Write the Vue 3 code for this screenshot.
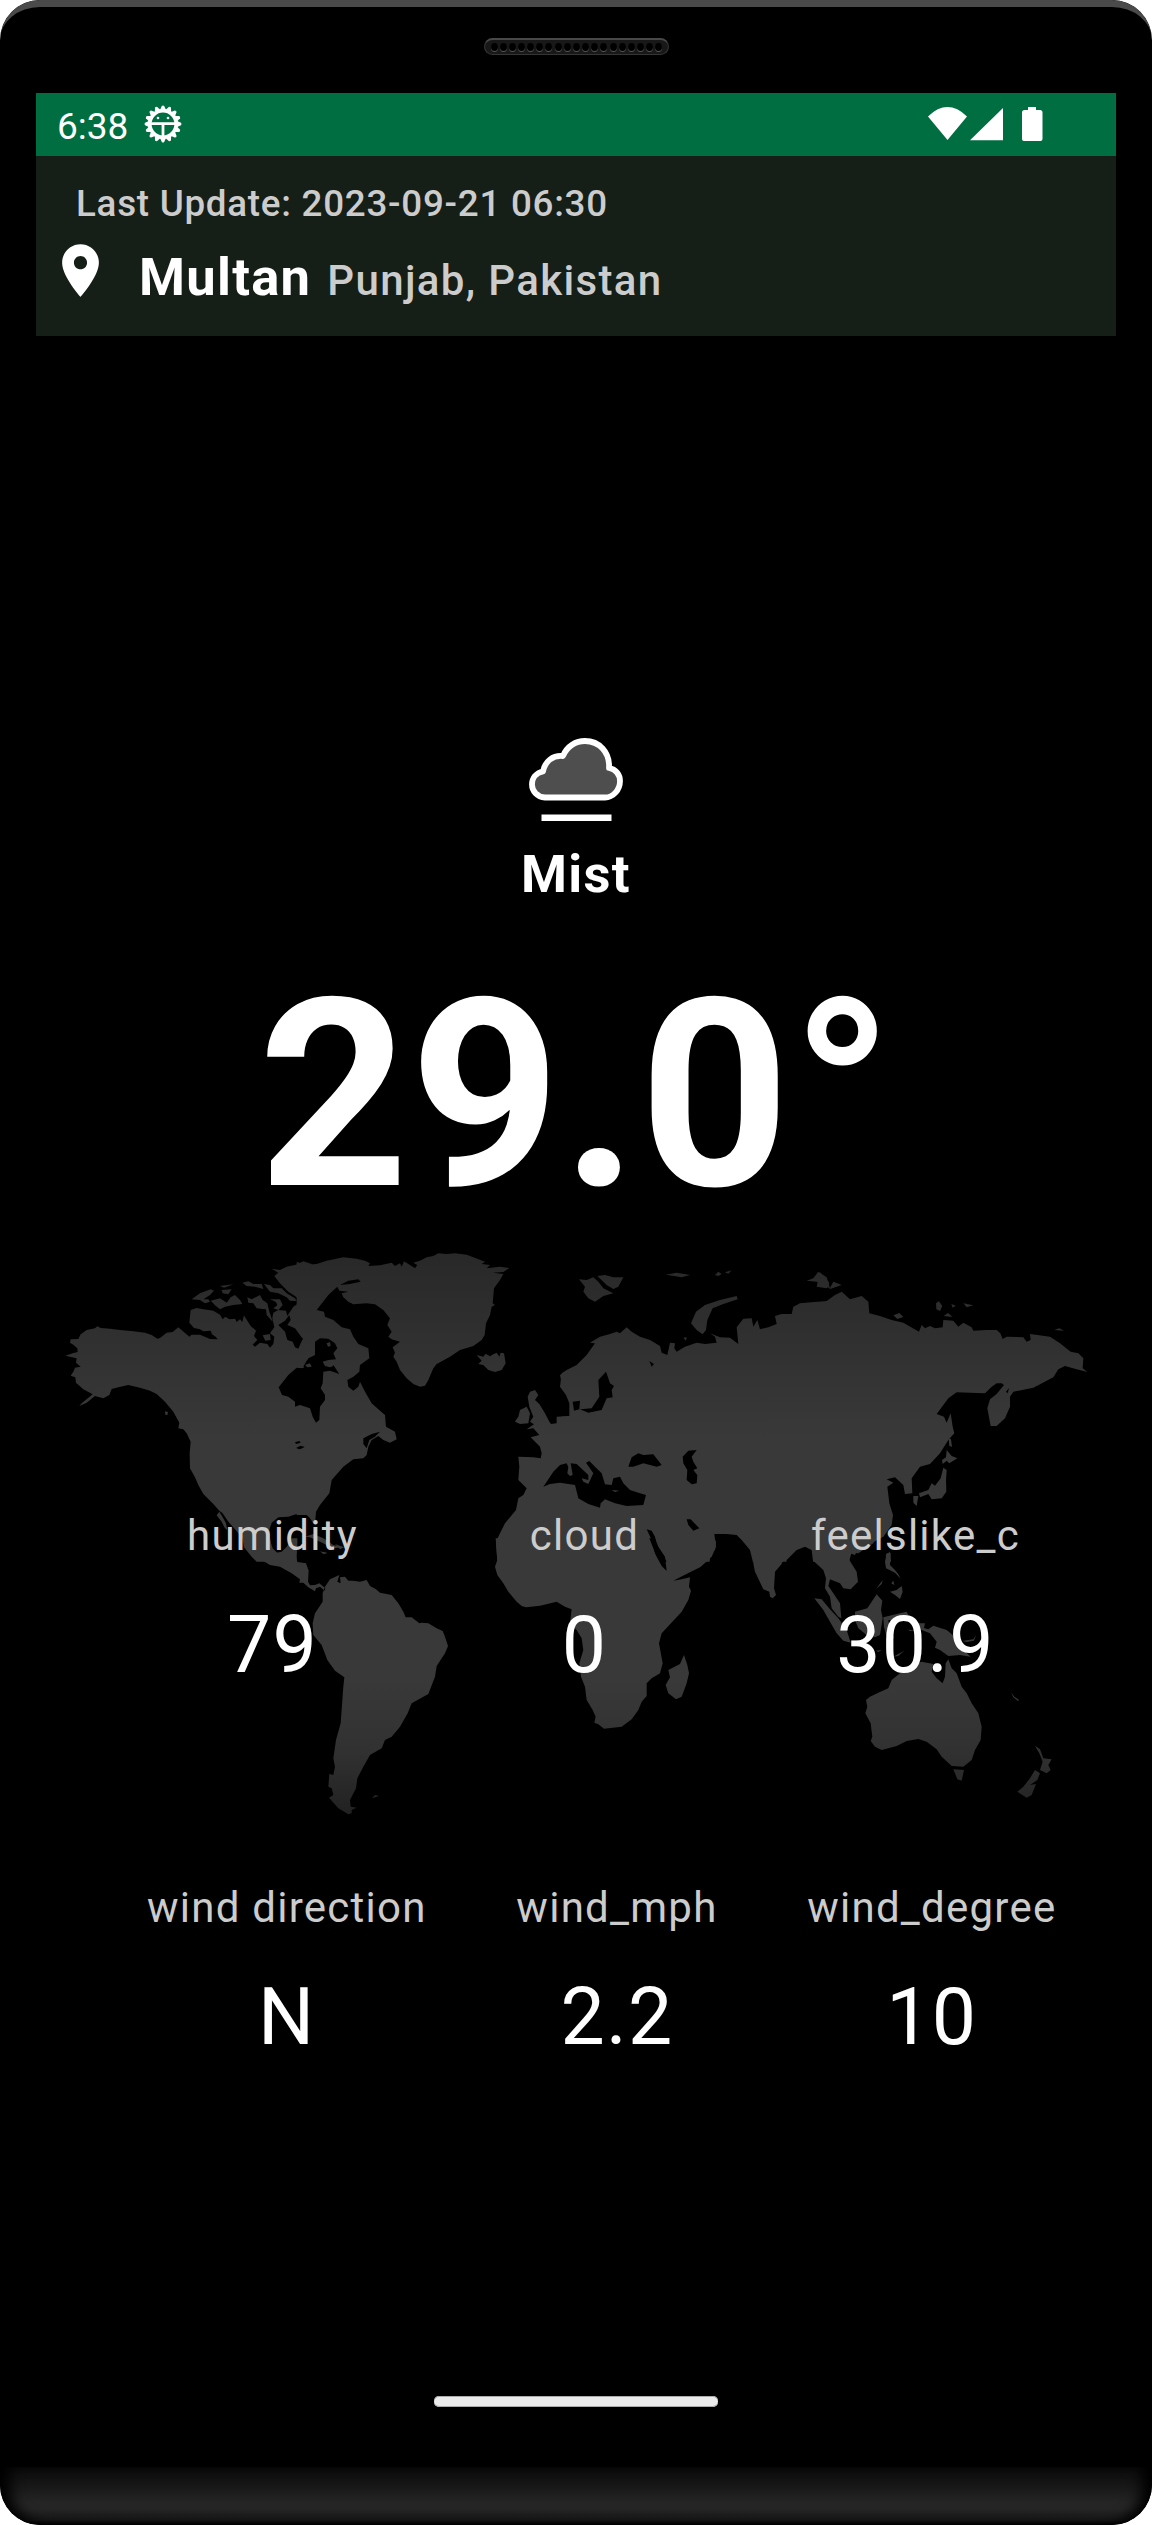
<script setup>
const rows = [
  { id: 'air', items: [
    { label: 'humidity', value: '79' },
    { label: 'cloud', value: '0' },
    { label: 'feelslike_c', value: '30.9' },
  ] },
  { id: 'wind', items: [
    { label: 'wind direction', value: 'N' },
    { label: 'wind_mph', value: '2.2' },
    { label: 'wind_degree', value: '10' },
  ] },
]

// Coastlines are grouped by map sheet; every sheet is drawn at 3x with its own origin.
const sheets = {
  alaska: 'translate(40 1240) scale(.33333)',
  atlantic: 'translate(300 1240) scale(.33333)',
  europe: 'translate(560 1240) scale(.33333)',
  pacific: 'translate(820 1240) scale(.33333)',
  south: 'translate(220 1540) scale(.33333)',
  africa: 'translate(480 1540) scale(.33333)',
  oceania: 'translate(780 1540) scale(.33333)',
}

const land = [
  { sheet: 'alaska', d: 'M76 347L98 340 113 336 112 325 100 314 90 308 92 298 115 297 122 283 140 270 165 265 172 259 182 264 210 266 240 270 280 274 315 278 335 285 352 296 360 294 380 278 398 276 415 262 448 290 455 284 480 284 510 297 533 298 527 290 516 283 512 272 490 274 480 268 462 264 448 248 452 210 470 204 490 208 520 212 540 224 548 238 556 230 568 238 585 236 590 246 600 238 607 246 612 225 625 240 635 262 655 265 668 272 690 280 703 262 697 235 700 218 715 210 738 212 742 228 760 200 790 180 815 170 815 826 770 822 745 830 715 832 695 848 688 870 690 900 698 925 710 938 725 935 740 920 752 902 765 900 770 915 770 965 650 965 635 950 612 922 607 895 585 868 565 845 548 820 538 812 520 792 490 762 475 735 465 712 450 685 449 640 452 605 440 580 430 568 415 565 418 548 400 515 375 485 350 462 330 452 300 443 265 435 235 442 215 447 208 465 190 475 165 468 140 488 118 498 125 490 158 463 130 448 108 428 106 412 92 407 100 395 105 383 122 380 108 368 110 355ZM538 815L530 826 545 845 555 865 562 870 558 850 548 832ZM375 514L384 516 382 525 376 524ZM815 72L790 64 768 74 740 80 720 90 695 86 715 98 703 108 720 130 745 155 765 168 790 190 815 190Z' },
  { sheet: 'atlantic', d: 'M-10 65L15 75 50 72 80 62 130 52 170 56 195 62 210 70 205 78 240 76 275 68 285 78 300 70 305 80 312 64 330 75 345 85 352 75 340 68 360 62 380 52 400 48 415 40 440 42 465 40 500 44 520 52 555 65 545 72 570 75 560 85 600 80 628 84 610 96 578 98 610 102 600 120 582 145 578 190 585 195 575 200 570 225 558 250 554 285 545 300 520 318 480 330 450 350 410 372 400 385 385 420 375 437 360 440 340 432 320 415 300 390 290 365 280 350 285 338 278 322 300 305 275 298 265 290 275 275 262 255 270 235 250 210 225 193 200 190 160 193 145 185 130 172 125 160 145 155 118 152 112 140 85 165 50 210 72 215 75 230 100 240 125 262 150 268 160 290 175 312 205 325 208 355 180 375 178 395 160 410 142 420 145 440 160 452 175 440 180 425 195 455 215 490 240 512 255 525 258 560 285 575 290 598 270 608 250 600 235 588 215 600 205 620 200 645 190 655 160 658 130 680 95 720 88 760 60 795 48 815 46 840 40 850 30 835 20 825-10 825Z' },
  { sheet: 'atlantic', d: 'M530 345L550 350 557 341 570 349 580 343 590 338 598 350 602 338 612 340 617 370 605 390 585 396 565 390 550 375 535 372 545 362ZM815 385L780 405 785 430 800 465 815 480ZM690 455L705 450 715 465 705 480 718 492 735 520 748 545 753 552 770 550 785 530 820 527 820 965 592 965 588 905 600 880 615 850 648 810 655 775 670 765 680 745 655 720 658 680 655 650 700 652 722 655 725 640 720 620 692 592 718 585 700 565 680 568 702 553 690 545 700 530 688 500 683 470ZM660 510L680 500 690 520 685 550 660 552 645 545 655 530ZM15 890L40 882 70 895 100 915 130 922 100 925 60 905 30 892ZM60 934L82 940 70 942Z' },
  { sheet: 'europe', d: 'M5 400L20 390 50 375 80 345 105 310 90 308 120 290 150 282 170 275 180 280 200 262 215 275 240 290 270 300 300 318 305 338 322 345 330 308 345 310 343 325 350 335 375 320 410 308 435 312 470 308 465 290 450 280 480 292 510 293 535 312 530 262 550 236 575 235 580 260 592 240 600 268 625 262 650 252 645 228 665 222 695 222 700 200 720 190 770 185 790 185 790 965 -10 965-10 530 28 528 28 490 18 465 0 440Z' },
  { sheet: 'europe', d: 'M57 118L80 120 100 112 115 125 130 145 160 160 130 168 105 185 85 175 70 155 75 140ZM112 108L135 105 160 112 190 112 175 140 160 147 140 135ZM318 104L350 98 390 105 365 112ZM465 105L475 95 485 102 475 108ZM495 97L515 91 505 101ZM393 250L408 215 435 195 480 180 530 168 533 178 490 192 458 205 442 240 438 270 428 283 410 270ZM370 293L380 292 378 302ZM740 122L760 115 775 95 800 112 810 145 790 138 770 125Z' },
  { sheet: 'pacific', d: 'M-10 187L20 183 45 165 65 155 90 178 125 168 145 185 148 220 180 228 215 240 250 248 297 275 305 255 315 265 330 258 345 265 368 262 370 240 400 242 415 260 430 248 455 262 460 272 500 270 530 270 541 280 548 297 560 290 610 292 620 305 632 300 630 282 690 290 720 310 752 335 775 340 790 355 788 385 802 396 770 388 735 378 715 388 700 412 640 443 580 455 570 470 570 500 555 535 530 558 512 558 502 505 510 478 530 462 552 435 545 430 530 430 515 440 495 460 450 458 410 457 385 475 350 522 372 530 380 548 392 520 398 560 403 580 385 600 360 640 330 672 300 680 275 715 277 760 255 762 250 735 225 712 200 718 220 728 202 740 208 790 219 825 215 855 190 890 150 912 110 935 105 945 90 940 88 965-10 965Z' },
  { sheet: 'pacific', d: 'M0 97L28 128 20 145-10 140ZM40 125L65 135 28 148ZM348 190L357 184 367 198 360 213 349 208ZM394 192L407 197 398 203ZM430 190L460 196 440 202ZM371 228L384 219 398 231ZM220 226L238 219 250 231 232 237ZM703 270L718 265 732 272ZM386 595L393 598 396 620 388 618ZM380 630L395 648 412 655 388 670 380 662 368 672 366 660 378 652ZM370 683L380 690 378 720 379 755 365 775 335 778 325 762 300 772 297 760 325 750 335 730 345 737 362 715ZM280 768L295 768 290 798 280 788ZM197 945L210 935 213 965 202 965Z' },
  { sheet: 'south', d: 'M70-5L80 22 105 48 150 75 180 80 215 100 240 118 238 128 250 128 265 142 285 154 288 145 300 140 314 152 316 145 298 130 285 135 270 136 264 125 266 92 258 70 232 66 228 50 232 20 232-5 215-5 200 35 175 41 155 25 150-5ZM305 35L322 38 308 40ZM345 12L372 22 360 28ZM315 140L330 118 358 105 352 125 362 130 360 112 375 110 385 122 400 122 420 125 440 120 450 138 468 148 480 158 515 165 535 190 550 215 557 232 575 232 598 250 605 248 625 250 650 265 668 273 675 290 684 318 675 340 650 378 645 410 625 462 575 490 563 520 540 560 515 590 495 600 485 625 450 645 430 680 412 715 408 745 390 780 392 800 410 803 395 810 395 820 385 823 355 805 327 773 340 765 335 745 325 740 328 702 340 705 345 680 340 655 348 600 362 550 370 440 373 412 345 392 322 360 305 315 280 285 278 250 285 220 308 185 308 160ZM456 775L465 765 477 768Z' },
  { sheet: 'africa', d: 'M47-5L52 60 45 80 52 105 70 130 85 155 110 185 125 198 138 202 180 197 230 185 255 200 275 208 270 250 290 270 305 295 310 330 298 370 303 410 315 440 320 480 338 510 347 530 343 548 355 553 372 566 425 560 455 538 475 510 485 485 500 468 500 430 515 415 540 400 548 370 537 310 545 280 605 215 625 180 633 152 627 140 630 112 605 118 580 122 600 112 660 82 695 50 708 20 703-5ZM777-5L812 30 825 95 850 148 868 155 870 170 878 175 888 165 882 145 885 95 905 72 905-5ZM612 345L622 375 627 400 620 430 605 470 588 478 565 460 557 435 570 412 565 390 600 372Z' },
  { sheet: 'oceania', d: 'M-5-5L-5 78 40 35 75 22 95 32 100 62 130 90 138 115 135 145 150 170 155 205 175 230 184 235 180 190 160 160 145 138 150 118 180 130 190 145 212 148 234 125 230 95 208 60 215 38 235 40 280 10 285-5ZM103 175L125 178 150 208 175 235 200 270 212 308 190 302 170 280 150 245 130 210ZM225 215L262 205 290 163 307 182 303 210 308 235 300 285 285 292 260 285 235 265 225 240ZM320 40L332 40 330 75 345 90 355 103 362 116 345 98 318 85 315 65ZM288 147L308 120 305 132ZM330 155L350 150 365 138 368 155 360 177 345 165ZM340 122L343 135 334 130ZM310 232L335 226 380 215 385 225 355 240 325 240 330 270 343 295 320 290 312 260ZM383 269L405 271 390 273ZM410 250L435 250 432 264 445 268 460 257 500 270 530 295 545 325 572 350 540 345 505 348 480 330 465 323 470 305 450 280 425 270ZM545 303L580 298 588 286 582 302 560 306ZM288 332L305 330 295 336ZM340 350L373 332 355 348Z' },
  { sheet: 'oceania', d: 'M258 480L270 470 295 458 325 445 335 420 360 400 385 388 405 372 425 365 460 372 455 395 470 415 488 430 495 410 497 370 505 358 515 385 530 400 545 440 560 460 575 490 595 520 605 560 602 600 585 630 575 660 550 680 515 678 485 650 470 628 440 605 415 597 380 603 350 618 305 630 285 620 272 603 277 590 272 550 256 520 262 500ZM520 688L552 690 545 722 532 718ZM693 457L703 470 717 480 714 483 700 472ZM765 617L780 628 790 655 815 658 805 675 812 690 800 700 780 690 788 665 778 640ZM765 690L780 700 772 720 750 735 768 732 755 765 740 773 712 755 730 740 750 715Z' },
]

const water = [
  { sheet: 'alaska', d: 'M815 380L785 385 770 383 745 405 716 442 726 465 745 470 765 485 790 495 815 500ZM765 607L778 603 782 608 768 612ZM768 624L782 617 794 621 780 628ZM605 215L640 228 665 250 690 280 703 290 700 312 690 323 682 312 660 308 645 320 638 314 652 300 642 288 648 272 630 255ZM748 225L752 240 742 255 765 265 788 296 775 326 765 322 758 305 742 300 735 275 715 255 735 242ZM790 380L800 362 815 355 815 385Z' },
  { sheet: 'atlantic', d: 'M-15 388L10 385 25 355 45 345 45 305 60 295 85 296 105 310 112 325 100 340 108 358 85 360 68 365 75 378 100 375 118 402 90 392 70 395 68 430 62 445 75 465 75 480 60 500 58 540 48 548 38 530 30 505 0 495-15 500ZM190 595L215 582 240 575 225 590 208 600 200 625 190 612ZM120 135L145 122 175 118 182 125 150 132ZM0 290L9 296 0 310ZM-5 620L12 622-5 628Z' },
  { sheet: 'europe', d: 'M-50 740L-20 695 0 675 20 670 25 682 22 700 30 708 38 705 32 670 50 672 85 705 85 720 65 715 70 725 85 732 95 710 100 700 78 668 88 663 105 680 125 700 135 733 155 735 160 715 180 710 190 730 210 750 240 760 258 765 250 795 200 798 165 790 135 778 122 790 120 803 85 792 55 775 45 735 0 728-30 732ZM205 680L215 652 235 640 250 645 280 643 305 675 290 680 250 670 220 680ZM410 630L385 632 368 650 370 670 382 690 380 720 395 733 410 730 412 705 400 690 412 685 400 665 395 650ZM138 395L145 415 150 430 162 438 155 450 158 472 140 475 125 510 85 518 60 508 95 505 118 470 115 420ZM38 485L60 482 58 508 42 512ZM268 363L282 372 275 380ZM260 868L275 872 285 890 290 915 320 965 300 965 285 940 275 900ZM380 838L392 838 418 865 400 872 385 855ZM465 930L468 905 455 882 500 882 530 885 545 900 570 930 580 971 448 971 452 940ZM678 971L680 960 710 930 735 920 755 930 760 971Z' },
  { sheet: 'africa', d: 'M508-5L525-5 535 20 555 50 560 93 545 78 530 50Z' },
  { sheet: 'pacific', d: 'M558 455L567 444 563 460Z' },
]

const islands = [
  { sheet: 'alaska', d: 'M455 178L480 160 512 148 522 152 510 165 490 178 505 178 510 185 495 190 480 180ZM512 182L540 175 560 188 572 172 585 165 600 180 607 192 580 195 555 200 540 208 525 196ZM545 150L575 148 565 163 548 160ZM540 138L580 133 552 143ZM607 128L625 124 640 132 665 132 670 147 645 140 620 138ZM622 172L635 178 650 170 660 165 668 180 682 190 688 215 698 245 680 225 678 208 650 205 640 190 625 188ZM672 132L690 135 700 145 725 145 740 160 765 175 770 183 750 182 740 172 715 160 690 155ZM690 178L720 178 728 195 715 210 700 205 712 196 708 186ZM668 286L690 282 692 300 676 302Z' },
  { sheet: 'atlantic', d: 'M80 310L90 306 92 318 84 320ZM15 375L30 370 35 380 22 382ZM75 378L90 382 100 378 95 370Z' },
  { sheet: 'europe', d: 'M155 750L178 752 165 756Z' },
  { sheet: 'africa', d: 'M660 82L695 50 708 20 703-18 670-18 640 60Z' },
]

const holes = Array.from({ length: 19 }, (_, i) => i)
const teeth = Array.from({ length: 16 }, (_, i) => i * 22.5)
</script>

<template>
  <main class="phone">
    <div class="bezel-top">
      <div class="speaker"><i v-for="h in holes" :key="h"></i></div>
    </div>

    <div class="screen">
      <div class="status">
        <span class="clock">6:38</span>
        <svg class="debug" viewBox="0 0 38 38">
          <g fill="#fff">
            <path v-for="a in teeth" :key="a" d="M15.8 5.500L17.800 1Q19 0 20.200 1L22.200 5.500Z" :transform="`rotate(${a} 19 19)`" />
          </g>
          <circle cx="19" cy="19" r="13.200" fill="none" stroke="#fff" stroke-width="3.600" />
          <path d="M5 18.600H33M19 19V32" stroke="#fff" stroke-width="2.800" />
          <circle cx="14" cy="13" r="1.300" fill="#fff" /><circle cx="24" cy="13" r="1.300" fill="#fff" />
        </svg>
        <svg class="signals" viewBox="0 0 116 36" fill="#fff">
          <path d="M0 9.5Q19.5-9.3 39 9.5L19.5 33ZM42 33.3L75 1V33.3ZM100 0H108V3H112Q114.500 3 114.500 5.500V32Q114.500 34 112.500 34H96Q94 34 94 32V5.500Q94 3 96.500 3H100Z" />
        </svg>
      </div>

      <header class="place">
        <div class="updated">Last Update: 2023-09-21 06:30</div>
        <div class="where">
          <svg class="pin" viewBox="0 0 24 24"><path fill="#fff" d="M12 2C8.130 2 5 5.130 5 9c0 5.250 7 13 7 13s7-7.750 7-13c0-3.870-3.130-7-7-7zm0 9.500c-1.380 0-2.500-1.120-2.500-2.500s1.120-2.500 2.500-2.500 2.500 1.120 2.500 2.500-1.120 2.500-2.500 2.500z" /></svg>
          <b class="city">Multan</b>
          <span class="region">Punjab, Pakistan</span>
        </div>
      </header>

      <section class="now">
        <svg class="cloud" viewBox="0 0 100 90">
          <path d="M17 60.500C9 60 4 54 4 47.500C4 41 8 36 15 34.500C17 24 25 18 35 19C39 9 48 4 57 4C71 4 82 15 81 31C88 32 92 38 92 44C92 53 85 60.500 77 60.500Z" fill="#4e4e4e" stroke="#fff" stroke-width="5.800" stroke-linejoin="round" />
          <rect x="13.500" y="77.500" width="70" height="6.500" fill="#fff" />
        </svg>
        <div class="condition">Mist</div>
        <div class="temp">29.0°</div>
      </section>

      <section class="details">
        <svg class="map" viewBox="36 1240 1080 620" aria-hidden="true">
          <defs>
            <linearGradient id="shade" x1="0" y1="0" x2="0" y2="1">
              <stop offset="0" stop-color="#282828" />
              <stop offset=".33" stop-color="#393939" />
              <stop offset=".75" stop-color="#393939" />
              <stop offset=".88" stop-color="#313131" />
              <stop offset="1" stop-color="#202020" />
            </linearGradient>
            <mask id="earth" maskUnits="userSpaceOnUse" x="36" y="1240" width="1080" height="620">
              <g fill="#fff"><path v-for="(p, i) in land" :key="i" :d="p.d" :transform="sheets[p.sheet]" /></g>
              <g fill="#000"><path v-for="(p, i) in water" :key="i" :d="p.d" :transform="sheets[p.sheet]" /></g>
              <g fill="#fff"><path v-for="(p, i) in islands" :key="i" :d="p.d" :transform="sheets[p.sheet]" /></g>
            </mask>
          </defs>
          <rect x="36" y="1250" width="1080" height="570" fill="url(#shade)" mask="url(#earth)" />
        </svg>
        <div v-for="row in rows" :key="row.id" class="row" :class="row.id">
          <div v-for="s in row.items" :key="s.label" class="stat">
            <span class="label">{{ s.label }}</span>
            <span class="value">{{ s.value }}</span>
          </div>
        </div>
      </section>

      <div class="home"></div>
    </div>

    <div class="chin"></div>
  </main>
</template>

<style>
body { margin: 0; background: #fff; }
</style>

<style scoped>
.phone { position: relative; display: flex; flex-direction: column; width: 1152px; height: 2525px; overflow: hidden; border-radius: 40px; background: #000; font-family: Roboto, sans-serif; color: #fff; }
.bezel-top { box-sizing: border-box; height: 93px; padding-top: 31px; border-top: 7px solid #4a4a4a; border-radius: 40px 40px 0 0; }
.speaker { display: flex; justify-content: space-between; align-items: center; box-sizing: border-box; width: 185px; height: 17px; margin: 0 auto; padding: 0 5px 0 6px; border: 1px solid #353535; border-top: 2px solid #484848; border-radius: 9px; background: #181818; }
.speaker i { width: 7px; height: 8px; border-radius: 50%; background: #000; box-shadow: 0 1px 0 #555; }
.screen { display: flex; flex-direction: column; width: 1080px; height: 2374px; margin: 0 36px; }
.status { display: flex; height: 63px; background: #006e40; }
.clock { margin-left: 21px; width: 72px; font-size: 37px; line-height: 42px; padding-top: 13px; }
.debug { width: 38px; height: 38px; margin: 12px 0 0 15px; }
.signals { width: 116px; height: 36px; margin: 14px 72px 0 auto; }
.place { height: 180px; background: #151e17; }
.updated { padding: 26px 0 0 40px; font-size: 36.75px; line-height: 44px; font-weight: 500; letter-spacing: .74px; color: #ccc; }
.where { display: flex; align-items: baseline; padding: 7px 0 0 13px; line-height: 88px; white-space: nowrap; }
.pin { align-self: flex-start; width: 63px; height: 63px; margin-top: 6px; }
.city { margin-left: 27px; font-size: 52.5px; font-weight: 700; letter-spacing: 1.3px; }
.region { margin-left: 16px; font-size: 42px; font-weight: 500; letter-spacing: 1.35px; color: #ccc; }
.now { display: flex; flex-direction: column; align-items: center; height: 904px; }
.now > * { flex-shrink: 0; }
.cloud { width: 100px; height: 90px; margin: 401px 0 0 4px; }
.condition { margin-top: 17px; font-size: 52.5px; font-weight: 700; line-height: 60px; letter-spacing: 1.3px; }
.temp { margin: 41px 0 0 1px; font-size: 262.5px; font-weight: 700; line-height: 300px; letter-spacing: 1.3px; }
.details { position: relative; height: 1133px; }
.map { position: absolute; left: 0; top: 0; width: 1080px; height: 620px; }
.row { position: relative; display: flex; gap: 172px; height: 372px; box-sizing: border-box; }
.row.air { height: 643px; padding: 271px 0 0 151px; }
.row.wind { gap: 89.7px; margin-top: 0; padding-left: 111px; }
.stat { display: flex; flex-direction: column; align-items: center; white-space: nowrap; letter-spacing: 1.25px; }
.label { font-size: 42px; line-height: 50px; color: #ccc; }
.value { margin-top: 37px; font-size: 78.75px; line-height: 94px; }
.home { width: 284px; height: 11px; margin: 23px auto 0; border-radius: 5px; background: #ebebeb; box-shadow: inset 0 1px #aaa, inset 0 -1px #aaa; }
.chin { height: 58px; border-radius: 0 0 40px 40px; background: linear-gradient(#0d0d0d, #151515 28%, #252525 62%, #252525 72%, #181818 92%, #000); box-shadow: inset 14px 0 14px -4px #000, inset -14px 0 14px -4px #000; }
</style>
